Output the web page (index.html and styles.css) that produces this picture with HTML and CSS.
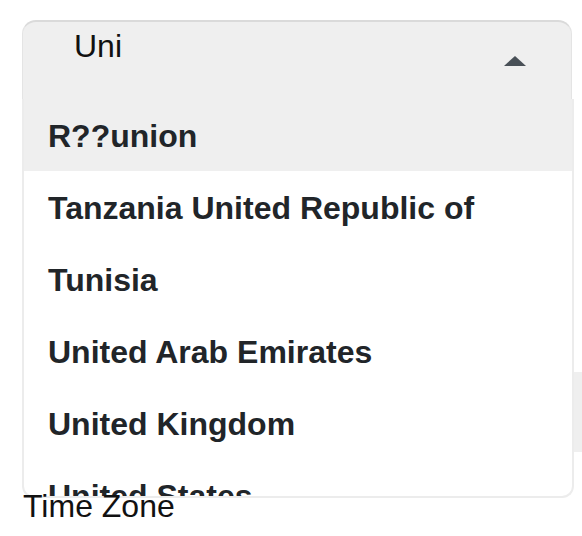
FILE: index.html
```html
<!DOCTYPE html>
<html>
<head>
<meta charset="utf-8">
<link rel="stylesheet" href="styles.css">
</head>
<body>
<div class="form">
  <div class="field-row"><div class="field-box"></div></div>
  <label class="label">Time Zone</label>
</div>
<div class="dropdown">
  <div class="control">
    <span class="value">Uni</span>
    <span class="arrow"></span>
  </div>
  <ul class="menu">
    <li class="option active">R??union</li>
    <li class="option">Tanzania United Republic of</li>
    <li class="option">Tunisia</li>
    <li class="option">United Arab Emirates</li>
    <li class="option">United Kingdom</li>
    <li class="option">United States</li>
    <li class="option">Uruguay</li>
  </ul>
</div>
</body>
</html>
```
FILE: styles.css
```css
html, body {
  margin: 0;
  padding: 0;
  background: #fff;
  font-family: "Liberation Sans", Arial, Helvetica, sans-serif;
}
.form {
  padding-top: 372px;
}
.field-row {
  display: flex;
  height: 80px;
}
.field-box {
  margin-left: 574px;
  width: 40px;
  background: #efefef;
}
.label {
  display: block;
  position: relative;
  z-index: 2;
  margin-top: 36px;
  padding-left: 23px;
  font-size: 32px;
  line-height: 36px;
  color: #111;
}
.dropdown {
  position: absolute;
  left: 22px;
  top: 20px;
  width: 552px;
  z-index: 1;
}
.control {
  box-sizing: border-box;
  width: 550px;
  height: 79px;
  display: flex;
  align-items: flex-start;
  background: #efefef;
  border-top: 2px solid #dadada;
  border-left: 1px solid #e4e4e4;
  border-right: 1px solid #e4e4e4;
  border-radius: 14px 14px 0 0;
  padding: 6px 0 0 51px;
}
.value {
  font-size: 32px;
  line-height: 36px;
  color: #111;
}
.arrow {
  margin-left: auto;
  margin-right: 45px;
  margin-top: 28px;
  width: 0;
  height: 0;
  border-left: 11px solid transparent;
  border-right: 11px solid transparent;
  border-bottom: 10px solid #495057;
}
.menu {
  box-sizing: border-box;
  list-style: none;
  margin: 0;
  padding: 0;
  height: 399px;
  overflow: hidden;
  background: #fff;
  border: 2px solid #ececec;
  border-top: 0;
  border-radius: 0 0 12px 12px;
}
.option {
  height: 72px;
  line-height: 74px;
  padding-left: 24px;
  font-size: 32px;
  font-weight: bold;
  color: #212529;
  white-space: nowrap;
}
.option.active {
  background: #efefef;
}
```
